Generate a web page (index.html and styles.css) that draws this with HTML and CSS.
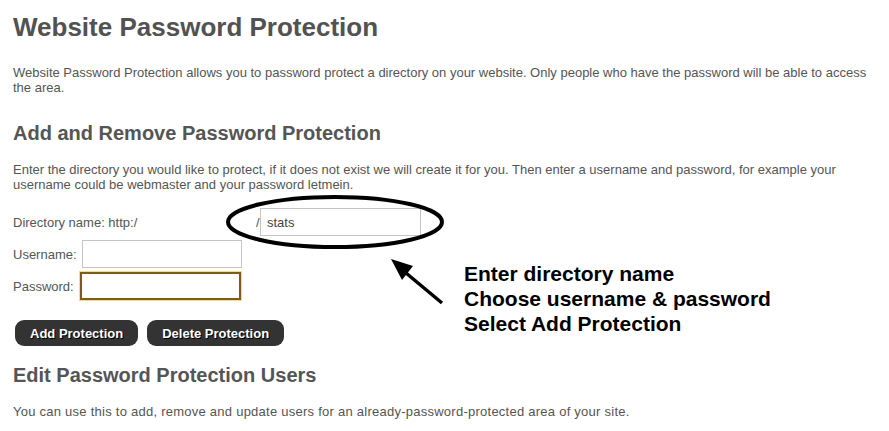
FILE: index.html
```html
<!DOCTYPE html>
<html lang="en">
<head>
    <meta charset="UTF-8">
    <title>Website Password Protection</title>
    <link rel="stylesheet" href="styles.css">
</head>
<body>
    <div class="page">
        <h1>Website Password Protection</h1>
        <p class="intro">Website Password Protection allows you to password protect a directory on your website. Only people who have the password will be able to access the area.</p>

        <h2>Add and Remove Password Protection</h2>
        <p class="intro">Enter the directory you would like to protect, if it does not exist we will create it for you. Then enter a username and password, for example your username could be webmaster and your password letmein.</p>

        <form class="protect-form">
            <div class="form-row">
                <label class="dir-label" for="dirname">Directory name: http:/</label>
                <span class="slash">/</span>
                <input type="text" id="dirname" class="field dir-field" value="stats">
            </div>
            <div class="form-row">
                <label for="username">Username:</label>
                <input type="text" id="username" class="field">
            </div>
            <div class="form-row">
                <label for="password">Password:</label>
                <input type="password" id="password" class="field field-focus">
            </div>
            <div class="buttons">
                <button type="button" class="btn">Add Protection</button>
                <button type="button" class="btn">Delete Protection</button>
            </div>
        </form>

        <h2 class="edit-title">Edit Password Protection Users</h2>
        <p class="intro note">You can use this to add, remove and update users for an already-password-protected area of your site.</p>
    </div>

    <!-- hand-drawn notes on top of the form -->
    <svg class="markup" width="889" height="431" viewBox="0 0 889 431">
        <ellipse cx="335" cy="222" rx="107" ry="25" fill="none" stroke="#000" stroke-width="4"/>
        <line x1="442" y1="303" x2="400" y2="268" stroke="#000" stroke-width="3.5"/>
        <polygon points="391,259 402,280 413,266" fill="#000"/>
    </svg>
    <div class="steps">
        <div>Enter directory name</div>
        <div>Choose username &amp; password</div>
        <div>Select Add Protection</div>
    </div>
</body>
</html>
```

FILE: styles.css
```css
* {
    box-sizing: border-box;
    margin: 0;
    padding: 0;
}

body {
    font-family: 'Liberation Sans', Arial, sans-serif;
    font-size: 13px;
    color: #555;
    background: #fff;
    position: relative;
    overflow: hidden;
}

.page {
    width: 875px;
    padding: 11px 0 0 13px;
}

h1 {
    font-size: 26px;
    font-weight: bold;
    color: #525252;
    line-height: 32px;
    margin-bottom: 22px;
}

h2 {
    font-size: 20px;
    font-weight: bold;
    color: #555;
    line-height: 24px;
    margin: 26px 0 17px;
}

.intro {
    line-height: 15px;
}

.note {
    letter-spacing: 0.25px;
}

.protect-form {
    margin-top: 16px;
}

.form-row {
    display: flex;
    align-items: center;
    height: 28px;
    margin-bottom: 4px;
}

.form-row label {
    margin-right: 5px;
}

.form-row .dir-label {
    width: 243px;
    margin-right: 0;
}

.slash {
    width: 4px;
}

.field {
    width: 160px;
    height: 28px;
    border: 1px solid #c4c4c4;
    padding: 0 6px;
    font-family: inherit;
    font-size: 13px;
    color: #444;
}

.dir-field {
    width: 161px;
}

.field-focus {
    width: 161px;
    margin-left: 1px;
    border: 2px solid #7d5c14;
    box-shadow: 0 0 0 1px #f4dc86;
    outline: none;
}

.buttons {
    display: flex;
    gap: 9px;
    margin: 20px 0 0 2px;
}

.btn {
    height: 26px;
    padding: 0 15px;
    background: #333;
    color: #fff;
    border: none;
    border-radius: 9px;
    font-family: inherit;
    font-size: 13px;
    font-weight: bold;
    text-shadow: 1px 1px 0 #000;
    cursor: pointer;
}

.edit-title {
    margin-top: 17px;
}

.markup {
    position: absolute;
    left: 0;
    top: 0;
    pointer-events: none;
}

.steps {
    position: absolute;
    left: 464px;
    top: 261px;
    font-size: 21px;
    font-weight: bold;
    color: #000;
    line-height: 25px;
}
```
